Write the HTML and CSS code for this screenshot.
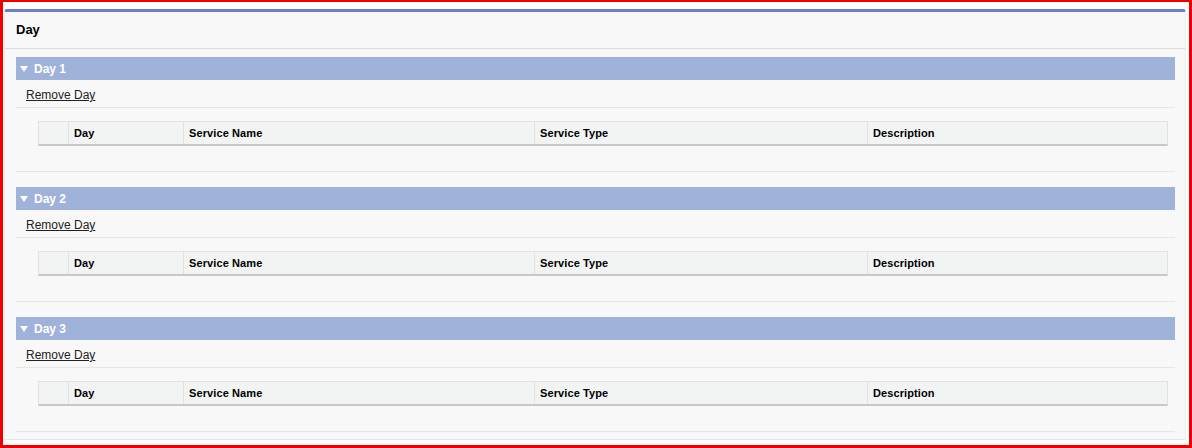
FILE: index.html
```html
<!DOCTYPE html>
<html>
<head>
<meta charset="utf-8">
<link rel="stylesheet" href="styles.css">
</head>
<body>
<div class="frame">
  <div class="panel">
    <div class="panel-head">Day</div>
    <div class="sections">
      <div class="section">
        <div class="bar"><span class="tri"></span>Day 1</div>
        <div class="links"><a href="#">Remove Day</a></div>
        <div class="tbl">
          <div class="c c0"></div><div class="c c1">Day</div><div class="c c2">Service Name</div><div class="c c3">Service Type</div><div class="c c4">Description</div>
        </div>
      </div>
      <div class="section">
        <div class="bar"><span class="tri"></span>Day 2</div>
        <div class="links"><a href="#">Remove Day</a></div>
        <div class="tbl">
          <div class="c c0"></div><div class="c c1">Day</div><div class="c c2">Service Name</div><div class="c c3">Service Type</div><div class="c c4">Description</div>
        </div>
      </div>
      <div class="section">
        <div class="bar"><span class="tri"></span>Day 3</div>
        <div class="links"><a href="#">Remove Day</a></div>
        <div class="tbl">
          <div class="c c0"></div><div class="c c1">Day</div><div class="c c2">Service Name</div><div class="c c3">Service Type</div><div class="c c4">Description</div>
        </div>
      </div>
    </div>
  </div>
</div>
</body>
</html>
```
FILE: styles.css
```css
* { box-sizing: border-box; }
html, body { margin: 0; padding: 0; background: #fff; }
body { font-family: "Liberation Sans", Arial, sans-serif; font-size: 12px; color: #222; }
.frame {
  width: 1192px; height: 448px;
  border-style: solid; border-color: #ee0000;
  border-width: 2px 3px 3px 3px;
  padding: 7px 3px 5px 1px;
  background: #fff;
}
.panel {
  height: 431px;
  background: #f8f8f8;
  border-top: 3px solid #6b80c4;
  border-left: 1px solid #ececec;
  border-right: 1px solid #ececec;
  border-bottom: 1px solid #e6e6e6;
  border-radius: 3px 3px 0 0;
}
.panel-head {
  height: 37px;
  padding-left: 11px;
  display: flex; align-items: center;
  font-weight: bold; font-size: 13px; color: #000;
  border-bottom: 1px solid #dcdcdc;
  padding-bottom: 1px;
}
.sections { padding: 8px 10px 0 11px; }
.section { border-bottom: 1px solid #e6e6e6; padding-bottom: 25px; margin-bottom: 15px; }
.section:last-child { margin-bottom: 0; }
.bar {
  height: 23px; background: #9fb2da; color: #fff;
  font-weight: bold; font-size: 12px;
  display: flex; align-items: center; padding-left: 4px;
}
.tri {
  width: 0; height: 0;
  border-left: 4px solid transparent; border-right: 4px solid transparent;
  border-top: 6px solid #fff;
  margin-right: 6px; margin-top: 1px;
}
.links {
  height: 28px; padding-left: 10px; padding-top: 3px;
  display: flex; align-items: center;
  border-bottom: 1px solid #e6e6e6;
}
.links a { color: #222; text-decoration: underline; }
.tbl {
  margin: 13px 7px 0 22px;
  height: 25px;
  display: flex;
  background: #f2f3f3;
  border: 1px solid #e0e3e5;
  border-bottom: 2px solid #c8c8c8;
}
.c {
  font-weight: bold; font-size: 11px; color: #000;
  display: flex; align-items: center; padding-left: 5px;
  border-left: 1px solid #e0e3e5;
  letter-spacing: 0.1px;
}
.c0 { width: 29px; border-left: none; }
.c1 { width: 115px; }
.c2 { width: 351px; }
.c3 { width: 333px; }
.c4 { flex: 1; }
```
